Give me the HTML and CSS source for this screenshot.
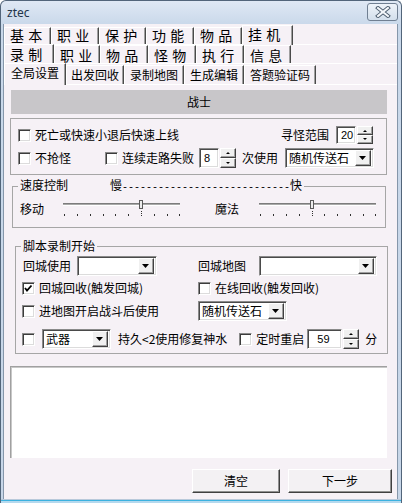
FILE: index.html
```html
<!DOCTYPE html>
<html>
<head>
<meta charset="utf-8">
<link rel="stylesheet" href="styles.css">
</head>
<body>
<div class="window">
  <div class="titlebar">
    <span class="title">ztec</span>
    <span class="close">
      <svg width="16" height="12" viewBox="0 0 16 12">
        <path d="M3 2 L13 10 M13 2 L3 10" stroke="#4f5f70" stroke-width="4" stroke-linecap="square"/>
        <path d="M3 2 L13 10 M13 2 L3 10" stroke="#f4f7fb" stroke-width="2" stroke-linecap="square"/>
      </svg>
    </span>
  </div>
  <div class="client">
    <div class="tabrow row1">
      <span class="tab w47">基 本</span>
      <span class="tab w48">职 业</span>
      <span class="tab w47">保 护</span>
      <span class="tab w48">功 能</span>
      <span class="tab w48">物 品</span>
      <span class="tab sel w51">挂 机</span>
    </div>
    <div class="tabrow row2">
      <span class="tab sel w50">录 制</span>
      <span class="tab w46">职 业</span>
      <span class="tab w48">物 品</span>
      <span class="tab w48">怪 物</span>
      <span class="tab w48">执 行</span>
      <span class="tab w47">信 息</span>
    </div>
    <div class="tabrow row3">
      <span class="tab sel w62">全局设置</span>
      <span class="tab w58">出发回收</span>
      <span class="tab w60">录制地图</span>
      <span class="tab w60">生成编辑</span>
      <span class="tab w72">答题验证码</span>
    </div>

    <div class="header">战士</div>

    <div class="group g1">
      <div class="row g1r1">
        <span class="cb"></span><span class="lbl t1">死亡或快速小退后快速上线</span>
        <span class="lbl push">寻怪范围</span>
        <span class="spin sp1">
          <span class="edit e20">20</span>
          <span class="spbtns"><span class="spb"><svg width="14" height="7" viewBox="0 0 14 7"><path d="M5 5 L7 3 L9 5 Z" fill="#000"/></svg></span><span class="spb"><svg width="14" height="7" viewBox="0 0 14 7"><path d="M5 2 L7 4 L9 2 Z" fill="#000"/></svg></span></span>
        </span>
      </div>
      <div class="row g1r2">
        <span class="cb"></span><span class="lbl t1">不抢怪</span>
        <span class="cb cb2"></span><span class="lbl t1">连续走路失败</span>
        <span class="spin sp2">
          <span class="edit e8">8</span>
          <span class="spbtns"><span class="spb"><svg width="14" height="8" viewBox="0 0 14 8"><path d="M5 5 L7 3 L9 5 Z" fill="#000"/></svg></span><span class="spb"><svg width="14" height="8" viewBox="0 0 14 8"><path d="M5 3 L7 5 L9 3 Z" fill="#000"/></svg></span></span>
        </span>
        <span class="lbl m6">次使用</span>
        <span class="combo c89 m7"><span class="ctext">随机传送石</span><span class="dd"><svg width="8" height="5" viewBox="0 0 8 5"><path d="M0 0 H7 L3.5 4 Z" fill="#000"/></svg></span></span>
      </div>
    </div>

    <fieldset class="grp speed">
      <legend><span>速度控制</span><span class="slow">慢<span class="dash">----------------------------</span>快</span></legend>
      <div class="sliders">
        <span class="slabel">移动</span>
        <svg class="slider" width="117" height="20" viewBox="0 0 117 20">
          <rect x="0" y="4" width="117" height="1" fill="#7c7c7c"/>
          <rect x="0" y="5" width="117" height="1" fill="#a9a9a9"/>
          <rect x="0" y="6" width="117" height="1" fill="#ffffff"/>
          <rect x="76.5" y="1.5" width="3" height="8" fill="#ececec" stroke="#5a5a5a"/>
          <g fill="#303030">
            <rect x="1" y="15" width="1" height="2"/><rect x="14" y="15" width="1" height="2"/><rect x="27" y="15" width="1" height="2"/><rect x="40" y="15" width="1" height="2"/><rect x="52" y="15" width="1" height="2"/><rect x="65" y="15" width="1" height="2"/><rect x="78" y="12" width="1" height="1"/><rect x="78" y="14" width="1" height="1"/><rect x="78" y="16" width="1" height="1"/><rect x="91" y="15" width="1" height="2"/><rect x="104" y="15" width="1" height="2"/><rect x="116" y="15" width="1" height="2"/>
          </g>
        </svg>
        <span class="slabel l2">魔法</span>
        <svg class="slider" width="117" height="20" viewBox="0 0 117 20">
          <rect x="0" y="4" width="117" height="1" fill="#7c7c7c"/>
          <rect x="0" y="5" width="117" height="1" fill="#a9a9a9"/>
          <rect x="0" y="6" width="117" height="1" fill="#ffffff"/>
          <rect x="51.5" y="1.5" width="3" height="8" fill="#ececec" stroke="#5a5a5a"/>
          <g fill="#303030">
            <rect x="1" y="15" width="1" height="2"/><rect x="14" y="15" width="1" height="2"/><rect x="27" y="15" width="1" height="2"/><rect x="40" y="15" width="1" height="2"/><rect x="53" y="12" width="1" height="1"/><rect x="53" y="14" width="1" height="1"/><rect x="53" y="16" width="1" height="1"/><rect x="65" y="15" width="1" height="2"/><rect x="78" y="15" width="1" height="2"/><rect x="91" y="15" width="1" height="2"/><rect x="104" y="15" width="1" height="2"/><rect x="116" y="15" width="1" height="2"/>
          </g>
        </svg>
      </div>
    </fieldset>

    <fieldset class="grp script">
      <legend>脚本录制开始</legend>
      <div class="sc">
        <div class="row s1">
          <span class="lbl w48">回城使用</span>
          <span class="combo c80 m6"><span class="ctext"></span><span class="dd"><svg width="8" height="5" viewBox="0 0 8 5"><path d="M0 0 H7 L3.5 4 Z" fill="#000"/></svg></span></span>
          <span class="lbl w48 m41">回城地图</span>
          <span class="combo c118 m13"><span class="ctext"></span><span class="dd"><svg width="8" height="5" viewBox="0 0 8 5"><path d="M0 0 H7 L3.5 4 Z" fill="#000"/></svg></span></span>
        </div>
        <div class="row s2">
          <span class="item i176"><span class="cb checked"><svg width="11" height="11" viewBox="0 0 11 11"><path d="M2 5 L4 7.5 L8.5 2.5" stroke="#000" stroke-width="1.8" fill="none"/></svg></span><span class="lbl t1">回城回收(触发回城)</span></span>
          <span class="item"><span class="cb"></span><span class="lbl t1">在线回收(触发回收)</span></span>
        </div>
        <div class="row s3">
          <span class="item i176"><span class="cb"></span><span class="lbl t1">进地图开启战斗后使用</span></span>
          <span class="combo c89"><span class="ctext">随机传送石</span><span class="dd"><svg width="8" height="5" viewBox="0 0 8 5"><path d="M0 0 H7 L3.5 4 Z" fill="#000"/></svg></span></span>
        </div>
        <div class="row s4">
          <span class="cb"></span>
          <span class="combo c69 m7"><span class="ctext">武器</span><span class="dd"><svg width="8" height="5" viewBox="0 0 8 5"><path d="M0 0 H7 L3.5 4 Z" fill="#000"/></svg></span></span>
          <span class="lbl m7">持久&lt;2使用修复神水</span>
          <span class="cb m12"></span>
          <span class="lbl t0">定时重启</span>
          <span class="spin sp3">
            <span class="edit e59">59</span>
            <span class="spbtns"><span class="spb"><svg width="14" height="8" viewBox="0 0 14 8"><path d="M5 5 L7 3 L9 5 Z" fill="#000"/></svg></span><span class="spb"><svg width="14" height="8" viewBox="0 0 14 8"><path d="M5 3 L7 5 L9 3 Z" fill="#000"/></svg></span></span>
          </span>
          <span class="lbl m6">分</span>
        </div>
      </div>
    </fieldset>

    <div class="memo"></div>

    <div class="buttons">
      <span class="btn b88">清空</span>
      <span class="btn b104">下一步</span>
    </div>
  </div>
  <div class="bottomedge"></div>
</div>
</body>
</html>
```

FILE: styles.css
```css
* { box-sizing: border-box; }
html, body { margin: 0; padding: 0; }
body {
  width: 402px;
  height: 503px;
  overflow: hidden;
  font-family: "Noto Sans CJK SC", "Noto Sans", sans-serif;
  font-size: 12px;
  color: #000;
  background: #ffffff;
}
.window {
  width: 402px;
  height: 503px;
  display: flex;
  flex-direction: column;
  border: 1px solid #52657a;
  border-bottom: none;
  border-radius: 6px 6px 0 0;
  background: linear-gradient(#dfe8f4, #c9d8ea 24px, #c7d6e8);
  overflow: hidden;
}
.titlebar {
  flex: none;
  height: 23px;
  display: flex;
  align-items: center;
  justify-content: space-between;
  padding: 0 3px 0 6px;
}
.title {
  font-family: "Noto Sans", sans-serif;
  font-size: 12px;
  line-height: 14px;
  color: #23354a;
  margin-top: 1px;
}
.close {
  width: 31px;
  height: 18px;
  margin-top: -1px;
  border: 1px solid #707f92;
  border-radius: 3px;
  background: linear-gradient(#eef3f9, #d3dfec);
  display: flex;
  align-items: center;
  justify-content: center;
}
.client {
  flex: none;
  height: 475px;
  margin: 0 3px 0 2px;
  border-left: 1px solid #8596aa;
  border-right: 1px solid #8596aa;
  background: #f6f1f6;
  display: flex;
  flex-direction: column;
}
.bottomedge {
  flex: none;
  height: 4px;
  background: linear-gradient(#b9c9da 0 1px, #3ab2e0 1px 2px, #b5d9ee 2px);
}

/* tabs */
.tabrow {
  flex: none;
  display: flex;
  align-items: flex-end;
  border-bottom: 1px solid #ffffff;
}
.row1 { height: 21px; }
.row2 { height: 19px; }
.row3 { height: 21px; }
.tab {
  height: 17px;
  display: flex;
  align-items: center;
  padding-left: 5px;
  border-top: 1px solid #ffffff;
  border-left: 1px solid #ffffff;
  border-right: 1px solid #4a4a4a;
  box-shadow: inset -1px 0 #a0a0a0;
  font-size: 14px;
  line-height: 14px;
  white-space: pre;
  word-spacing: 1px;
}
.row1 .tab { padding-bottom: 2px; }
.row2 .tab { height: 18px; }
.row3 .tab {
  height: 19px;
  font-size: 12px;
  justify-content: center;
  padding-left: 0;
  word-spacing: 0;
}
.tab.sel {
  height: 20px;
  margin-bottom: -1px;
  position: relative;
  z-index: 1;
  background: #f6f1f6;
  padding-bottom: 3px;
}
.row1 .tab.sel { padding-bottom: 4px; }
.row2 .tab.sel { height: 20px; padding-bottom: 2px; }
.row3 .tab.sel { height: 22px; padding-bottom: 3px; }
.w46 { width: 46px; }
.w47 { width: 47px; }
.w48 { width: 48px; }
.w50 { width: 50px; }
.w51 { width: 51px; }
.w58 { width: 58px; }
.w60 { width: 60px; }
.w62 { width: 62px; }
.w72 { width: 72px; }

.header {
  flex: none;
  margin: 5px 0 0 7px;
  width: 376px;
  height: 24px;
  background: #c8c6c9;
  display: flex;
  align-items: center;
  justify-content: center;
  line-height: 14px;
}

/* generic controls */
.row { display: flex; align-items: center; }
.lbl { line-height: 14px; white-space: nowrap; }
.t1 { margin-left: 4px; }
.t0 { margin-left: 4px; }
.push { margin-left: auto; }
.m6 { margin-left: 6px; }
.m7 { margin-left: 7px; }
.m12 { margin-left: 12px; }
.m13 { margin-left: 13px; }
.m41 { margin-left: 41px; }
.lbl.w48 { width: 48px; }

.cb {
  flex: none;
  width: 13px;
  height: 13px;
  background: #ffffff;
  border: 1px solid;
  border-color: #8a8a8a #ffffff #ffffff #8a8a8a;
  box-shadow: inset 1px 1px #3c3c3c, inset -1px -1px #dcdcdc;
  display: flex;
  align-items: center;
  justify-content: center;
}

.edit, .combo {
  background: #ffffff;
  border: 1px solid;
  border-color: #8a8a8a #ffffff #ffffff #8a8a8a;
  box-shadow: inset 1px 1px #4a4a4a, inset -1px -1px #dcdcdc;
}
.spin { display: flex; flex: none; }
.edit {
  display: flex;
  align-items: center;
  font-family: "Liberation Sans", sans-serif;
  font-size: 11px;
  line-height: 12px;
  padding-left: 4px;
}
.spbtns {
  display: flex;
  flex-direction: column;
  margin-left: 1px;
}
.spb {
  flex: 1;
  width: 16px;
  display: flex;
  align-items: center;
  justify-content: center;
  background: #f0f0f0;
  border: 1px solid;
  border-color: #ffffff #404040 #404040 #ffffff;
  box-shadow: inset -1px -1px #a0a0a0;
}
.sp1 { margin-left: 7px; height: 18px; }
.sp1 .edit { width: 20px; }
.sp2 { margin-left: 5px; height: 20px; }
.sp2 .edit { width: 20px; }
.sp3 { margin-left: 3px; height: 20px; }
.sp3 .edit { width: 35px; padding-left: 9px; }

.combo {
  flex: none;
  display: flex;
  align-items: center;
  height: 20px;
  padding: 2px;
}
.ctext {
  flex: 1;
  font-size: 12px;
  line-height: 16px;
  height: 16px;
  padding-left: 1px;
  white-space: nowrap;
}
.dd {
  flex: none;
  width: 16px;
  height: 16px;
  display: flex;
  align-items: center;
  justify-content: center;
  background: #f0f0f0;
  border: 1px solid;
  border-color: #ffffff #404040 #404040 #ffffff;
  box-shadow: inset -1px -1px #a0a0a0;
}
.c69 { width: 69px; }
.c80 { width: 80px; }
.c89 { width: 89px; }
.c118 { width: 118px; }

/* group 1 */
.group {
  flex: none;
  border: 1px solid #a6a6a6;
}
.g1 {
  margin: 4px 0 0 6px;
  width: 377px;
  padding: 7px 13px 6px 7px;
}
.g1r1 { height: 18px; }
.g1r2 { height: 20px; margin-top: 4px; }
.cb2 { margin-left: 34px; }

/* fieldsets */
fieldset.grp {
  flex: none;
  margin: 0;
  padding: 0;
  min-width: 0;
  border: 1px solid #a6a6a6;
}
fieldset.grp legend {
  margin-left: 5px;
  padding: 0 2px;
  font-size: 12px;
  line-height: 14px;
  white-space: nowrap;
}
.speed {
  margin: 3px 0 0 8px !important;
  width: 374px;
}
.slow { display: inline-block; margin-left: 42px; }
.dash {
  font-family: "Liberation Mono", monospace;
  font-size: 10px;
}
.sliders {
  display: flex;
  align-items: center;
  padding: 4px 0 8px 7px;
}
.slabel { width: 43px; line-height: 14px; }
.slabel.l2 { width: 44px; margin-left: 35px; }
.slider { display: block; flex: none; }

.script {
  margin: 11px 0 0 11px !important;
  width: 373px;
}
.sc { padding: 3px 0 4px 6px; }
.s1 { height: 20px; padding-left: 1px; }
.s2 { height: 24px; }
.s3 { height: 20px; margin-top: 1px; }
.s4 { height: 20px; margin-top: 8px; }
.item { display: flex; align-items: center; }
.i176 { width: 176px; }

.memo {
  flex: none;
  margin: 12px 0 0 6px;
  width: 377px;
  height: 92px;
  background: #ffffff;
  border-top: 1px solid #a0a0a0;
  border-left: 1px solid #a0a0a0;
  box-shadow: inset 1px 1px #c8c8c8;
}

.buttons {
  flex: none;
  display: flex;
  justify-content: flex-end;
  gap: 8px;
  margin: 11px 5px 0 0;
}
.btn {
  height: 24px;
  display: flex;
  align-items: center;
  justify-content: center;
  background: #f3f1f3;
  border: 1px solid;
  border-color: #ffffff #404040 #404040 #ffffff;
  box-shadow: inset -1px -1px #909090;
  line-height: 14px;
}
.b88 { width: 88px; }
.b104 { width: 104px; }
```
